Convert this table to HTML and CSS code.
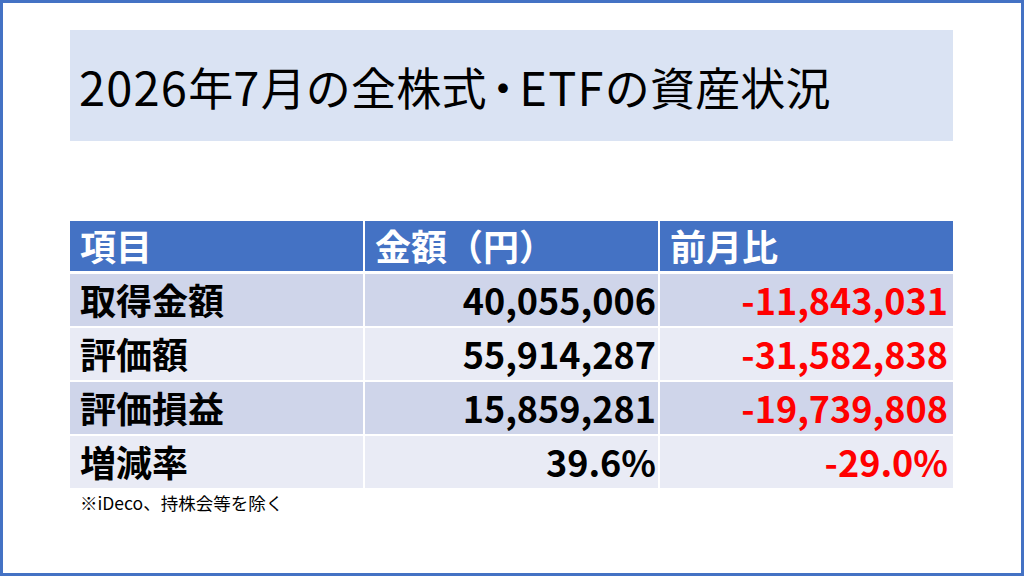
FILE: index.html
```html
<!DOCTYPE html>
<html lang="ja">
<head>
<meta charset="utf-8">
<link rel="stylesheet" href="styles.css">
</head>
<body>
<div class="slide">
  <div class="title-box">
    <h1 class="title"><span class="lat">2026</span>年<span class="lat">7</span>月の全株式<span class="dot">・</span><span class="lat">ETF</span>の資産状況</h1>
  </div>
  <div class="table">
    <div class="cell head">項目</div>
    <div class="cell head">金額（円）</div>
    <div class="cell head">前月比</div>

    <div class="cell odd">取得金額</div>
    <div class="cell odd num">40,055,006</div>
    <div class="cell odd num neg">-11,843,031</div>

    <div class="cell even">評価額</div>
    <div class="cell even num">55,914,287</div>
    <div class="cell even num neg">-31,582,838</div>

    <div class="cell odd">評価損益</div>
    <div class="cell odd num">15,859,281</div>
    <div class="cell odd num neg">-19,739,808</div>

    <div class="cell even">増減率</div>
    <div class="cell even num">39.6%</div>
    <div class="cell even num neg">-29.0%</div>
  </div>
  <p class="note">※iDeco、持株会等を除く</p>
</div>
</body>
</html>
```

FILE: styles.css
```css
html, body {
  margin: 0;
  padding: 0;
  background: #ffffff;
}

.slide {
  box-sizing: border-box;
  width: 1024px;
  height: 576px;
  border: 3px solid #4472C4;
  padding: 27px 68px 0 67px;
  display: flex;
  flex-direction: column;
  font-family: "Noto Sans CJK JP", "Noto Sans", sans-serif;
  color: #000000;
}

.title-box {
  height: 111px;
  background: #DAE3F3;
  display: flex;
  align-items: center;
  padding-left: 9px;
}

.title {
  margin: 0;
  font-size: 45px;
  font-weight: 400;
  line-height: 1;
  letter-spacing: 0.2px;
}

.lat {
  font-size: 47px;
  letter-spacing: 1.2px;
}

.dot {
  font-feature-settings: "palt" 1;
  padding: 0 5px;
}

.table {
  margin-top: 80px;
  display: grid;
  grid-template-columns: 293px 293px 1fr;
  grid-template-rows: 51px 52px 52px 52px 52px;
  column-gap: 2px;
  row-gap: 2px;
}

.cell {
  display: flex;
  align-items: center;
  padding: 0 10px 3px 10px;
  font-size: 36px;
  font-weight: 700;
  line-height: 1;
}

.head {
  background: #4472C4;
  color: #ffffff;
  margin-bottom: 1px;
  padding-bottom: 2px;
}

.odd {
  background: #CFD5EA;
}

.even {
  background: #E9EBF5;
}

.num {
  justify-content: flex-end;
  padding-right: 2px;
}

.neg {
  color: #FF0000;
  padding-right: 5px;
}

.note {
  margin: 4px 0 0 10px;
  font-size: 17.5px;
  line-height: 1.3;
}
```
